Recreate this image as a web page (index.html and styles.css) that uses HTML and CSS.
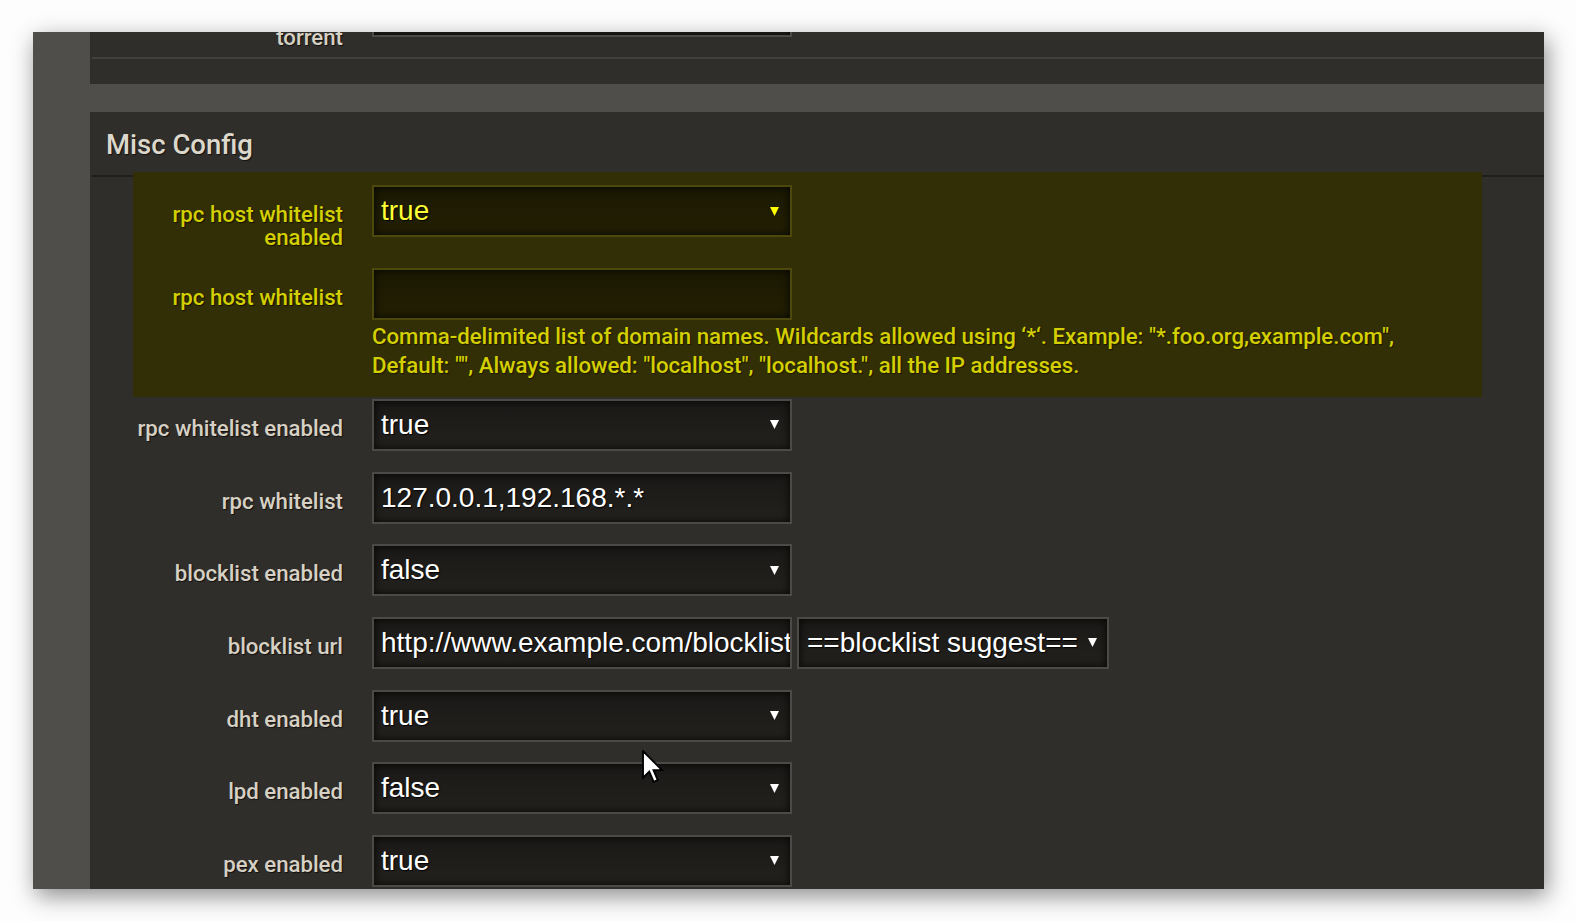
FILE: index.html
```html
<!DOCTYPE html>
<html>
<head>
<meta charset="utf-8">
<title>Misc Config</title>
<link rel="stylesheet" href="styles.css">
</head>
<body>
<div class="window">
  <div class="gutter"></div>
  <div class="main">
    <section class="panel panel-top">
      <div class="fields">
        <div class="row">
          <label class="lbl">trash original<br>torrent</label>
          <div class="ctl">
            <div class="field select"><span class="val">false</span><svg class="arrow" width="9" height="9" viewBox="0 0 9 9"><polygon points="0,0 9,0 4.5,9"/></svg></div>
          </div>
        </div>
      </div>
      <div class="rule"></div>
    </section>

    <section class="panel panel-misc">
      <h2 class="heading">Misc Config</h2>
      <div class="fields">
        <div class="highlight">
          <div class="row">
            <label class="lbl">rpc host whitelist<br>enabled</label>
            <div class="ctl">
              <div class="field select"><span class="val">true</span><svg class="arrow" width="9" height="9" viewBox="0 0 9 9"><polygon points="0,0 9,0 4.5,9"/></svg></div>
            </div>
          </div>
          <div class="row row-help">
            <label class="lbl">rpc host whitelist</label>
            <div class="ctl">
              <div class="field input"><span class="val"></span></div>
              <p class="help"><span>Comma-delimited list of domain names. Wildcards allowed using ‘*‘. Example: "*.foo.org,example.com",</span><span>Default: "", Always allowed: "localhost", "localhost.", all the IP addresses.</span></p>
            </div>
          </div>
        </div>

        <div class="row">
          <label class="lbl">rpc whitelist enabled</label>
          <div class="ctl">
            <div class="field select"><span class="val">true</span><svg class="arrow" width="9" height="9" viewBox="0 0 9 9"><polygon points="0,0 9,0 4.5,9"/></svg></div>
          </div>
        </div>
        <div class="row">
          <label class="lbl">rpc whitelist</label>
          <div class="ctl">
            <div class="field input"><span class="val">127.0.0.1,192.168.*.*</span></div>
          </div>
        </div>
        <div class="row">
          <label class="lbl">blocklist enabled</label>
          <div class="ctl">
            <div class="field select"><span class="val">false</span><svg class="arrow" width="9" height="9" viewBox="0 0 9 9"><polygon points="0,0 9,0 4.5,9"/></svg></div>
          </div>
        </div>
        <div class="row">
          <label class="lbl">blocklist url</label>
          <div class="ctl ctl-pair">
            <div class="field input"><span class="val">http://www.example.com/blocklist</span></div>
            <div class="field select suggest"><span class="val">==blocklist suggest==</span><svg class="arrow" width="9" height="9" viewBox="0 0 9 9"><polygon points="0,0 9,0 4.5,9"/></svg></div>
          </div>
        </div>
        <div class="row">
          <label class="lbl">dht enabled</label>
          <div class="ctl">
            <div class="field select"><span class="val">true</span><svg class="arrow" width="9" height="9" viewBox="0 0 9 9"><polygon points="0,0 9,0 4.5,9"/></svg></div>
          </div>
        </div>
        <div class="row">
          <label class="lbl">lpd enabled</label>
          <div class="ctl">
            <div class="field select"><span class="val">false</span><svg class="arrow" width="9" height="9" viewBox="0 0 9 9"><polygon points="0,0 9,0 4.5,9"/></svg></div>
          </div>
        </div>
        <div class="row">
          <label class="lbl">pex enabled</label>
          <div class="ctl">
            <div class="field select"><span class="val">true</span><svg class="arrow" width="9" height="9" viewBox="0 0 9 9"><polygon points="0,0 9,0 4.5,9"/></svg></div>
          </div>
        </div>
      </div>
    </section>
  </div>

  <svg class="cursor" width="22" height="33" viewBox="0 0 13 19.5">
    <path d="M0.6,0.6 L0.6,16.4 L4.3,12.8 L6.9,18.8 L9.3,17.8 L6.8,11.9 L11.8,11.9 Z" fill="#fff" stroke="#000" stroke-width="1.1" stroke-linejoin="miter"/>
  </svg>
</div>
</body>
</html>
```

FILE: styles.css
```css
html, body {
  margin: 0;
  padding: 0;
}

body {
  background: #fdfdfd;
  height: 921px;
  overflow: hidden;
  font-family: Roboto, "Liberation Sans", sans-serif;
}

.window {
  position: relative;
  margin: 32px 0 0 33px;
  width: 1511px;
  height: 857px;
  overflow: hidden;
  display: flex;
  background: #4f4e4a;
  box-shadow: 3px 7px 22px rgba(0, 0, 0, 0.45);
}

.gutter {
  width: 57px;
  flex: none;
}

.main {
  flex: 1;
  display: flex;
  flex-direction: column;
  gap: 28px;
}

.panel {
  background: #302e2a;
  padding-left: 2px;
}

.panel-top {
  margin-top: -47px;
  padding-bottom: 25px;
}

.panel-top .row {
  margin-bottom: 9px;
}

.rule {
  height: 2px;
  background: #42403c;
}

.heading {
  margin: 0;
  height: 60px;
  line-height: 60px;
  padding: 3px 0 0 14px;
  font-family: Roboto, sans-serif;
  font-weight: 500;
  font-size: 27.5px;
  color: #ddd8cc;
  text-shadow: 1px 1px 1px rgba(0, 0, 0, 0.6);
  border-bottom: 2px solid #1f1e1b;
}

.fields {
  margin: 0 62px 0 41px;
}

.highlight {
  background: #322e05;
  margin: -5px 0 2px;
  padding: 13px 0 17.33px;
}

.row {
  display: flex;
  align-items: flex-start;
  margin-bottom: 20.67px;
}

.highlight .row:first-child {
  margin-bottom: 19.67px;
}

.highlight .row-help {
  margin-bottom: 0;
}

.lbl {
  width: 210px;
  flex: none;
  text-align: right;
  padding-top: 18px;
  font-family: Roboto, sans-serif;
  font-weight: 500;
  font-size: 22.2px;
  line-height: 22.5px;
  color: #d6d1c4;
  text-shadow: 1px 1px 1px rgba(0, 0, 0, 0.65);
}

.ctl {
  margin-left: 29px;
  flex: 1;
  min-width: 0;
}

.ctl-pair {
  display: flex;
  gap: 5px;
}

.field {
  box-sizing: border-box;
  width: 420px;
  height: 52px;
  border: 2px solid #4c4a46;
  background: linear-gradient(#1a1917, #22211e);
  box-shadow: inset 0 0 8px rgba(0, 0, 0, 0.85);
  display: flex;
  align-items: center;
  padding: 0 11px 0 7px;
  overflow: hidden;
  white-space: nowrap;
  font-family: "Liberation Sans", Arial, sans-serif;
  font-size: 28px;
  color: #ffffff;
  text-shadow: 1px 1px 1px #000;
}

.field.input {
  padding-right: 0;
}

.field.suggest {
  width: 312px;
  padding-left: 8px;
  padding-right: 10px;
}

.val {
  flex: none;
}

.arrow {
  margin-left: auto;
  flex: none;
  fill: #ffffff;
}

.help {
  margin: 0;
  padding-top: 2px;
  font-family: Roboto, sans-serif;
  font-weight: 500;
  font-size: 22.2px;
  line-height: 29px;
  color: #d4cf00;
  text-shadow: 1px 1px 1px rgba(0, 0, 0, 0.5);
  white-space: nowrap;
}

.help span {
  display: block;
}

.highlight .lbl {
  color: #d4cf00;
}

.highlight .field {
  border-color: #4d480b;
  background: linear-gradient(#1b1902, #221f03);
  color: #ffff33;
}

.highlight .arrow {
  fill: #ffff00;
}

.cursor {
  position: absolute;
  left: 609px;
  top: 718px;
}
```
